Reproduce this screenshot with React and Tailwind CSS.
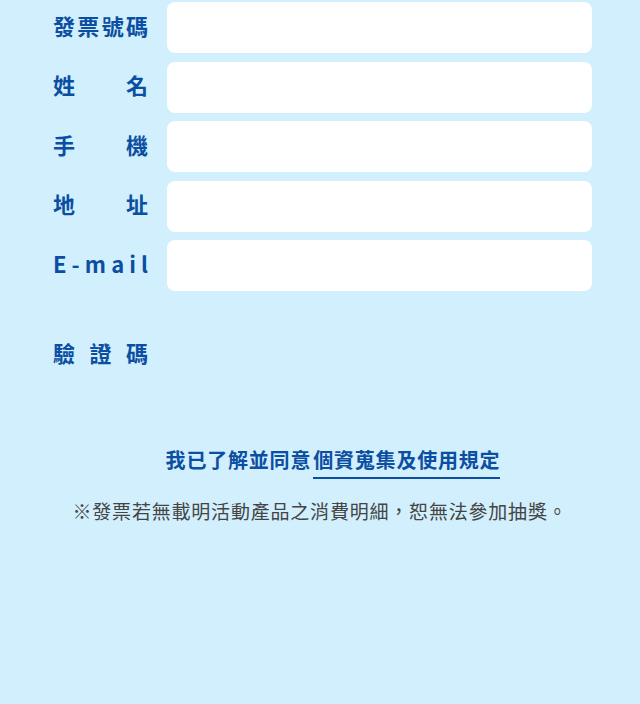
import React from "react";

const fields = [
  { label: "發票號碼", name: "invoice" },
  { label: "姓名", name: "name" },
  { label: "手機", name: "phone" },
  { label: "地址", name: "address" },
  { label: "E-mail", name: "email" },
];

function Label({ text }) {
  return (
    <div className="w-[95px] shrink-0 mb-[6px] flex justify-between text-[22px] font-bold text-[#0b4ea2] leading-none">
      {text.split("").map((ch, i) => (
        <span key={i}>{ch}</span>
      ))}
    </div>
  );
}

export default function App() {
  return (
    <div
      className="min-h-[704px] w-full bg-[#d1effc] pt-[2px]"
      style={{ fontFamily: '"Noto Sans CJK TC", "Noto Sans", sans-serif' }}
    >
      {/* Form fields */}
      <div className="flex flex-col gap-[8.5px] pl-[53px] pr-[48px]">
        {fields.map((f) => (
          <div key={f.name} className="flex items-center gap-[19px]">
            <Label text={f.label} />
            <input
              type="text"
              name={f.name}
              className="flex-1 h-[51px] rounded-[8px] bg-white outline-none px-3"
            />
          </div>
        ))}

        {/* Captcha */}
        <div className="flex items-center gap-[19px] h-[51px] mt-[30px]">
          <Label text="驗證碼" />
        </div>
      </div>

      {/* Agreement */}
      <div className="mt-[69px] flex justify-center">
        <p className="ml-[26px] text-[20px] font-bold text-[#0b4ea2] tracking-[0.8px] leading-none">
          我已了解並同意
          <span className="ml-[2px] border-b-2 border-[#0b4ea2] pb-[3px]">個資蒐集及使用規定</span>
        </p>
      </div>

      {/* Note */}
      <p className="mt-[31px] text-center text-[19px] font-normal text-[#444444] tracking-[0.8px] leading-none">
        ※發票若無載明活動產品之消費明細，恕無法參加抽獎。
      </p>
    </div>
  );
}
